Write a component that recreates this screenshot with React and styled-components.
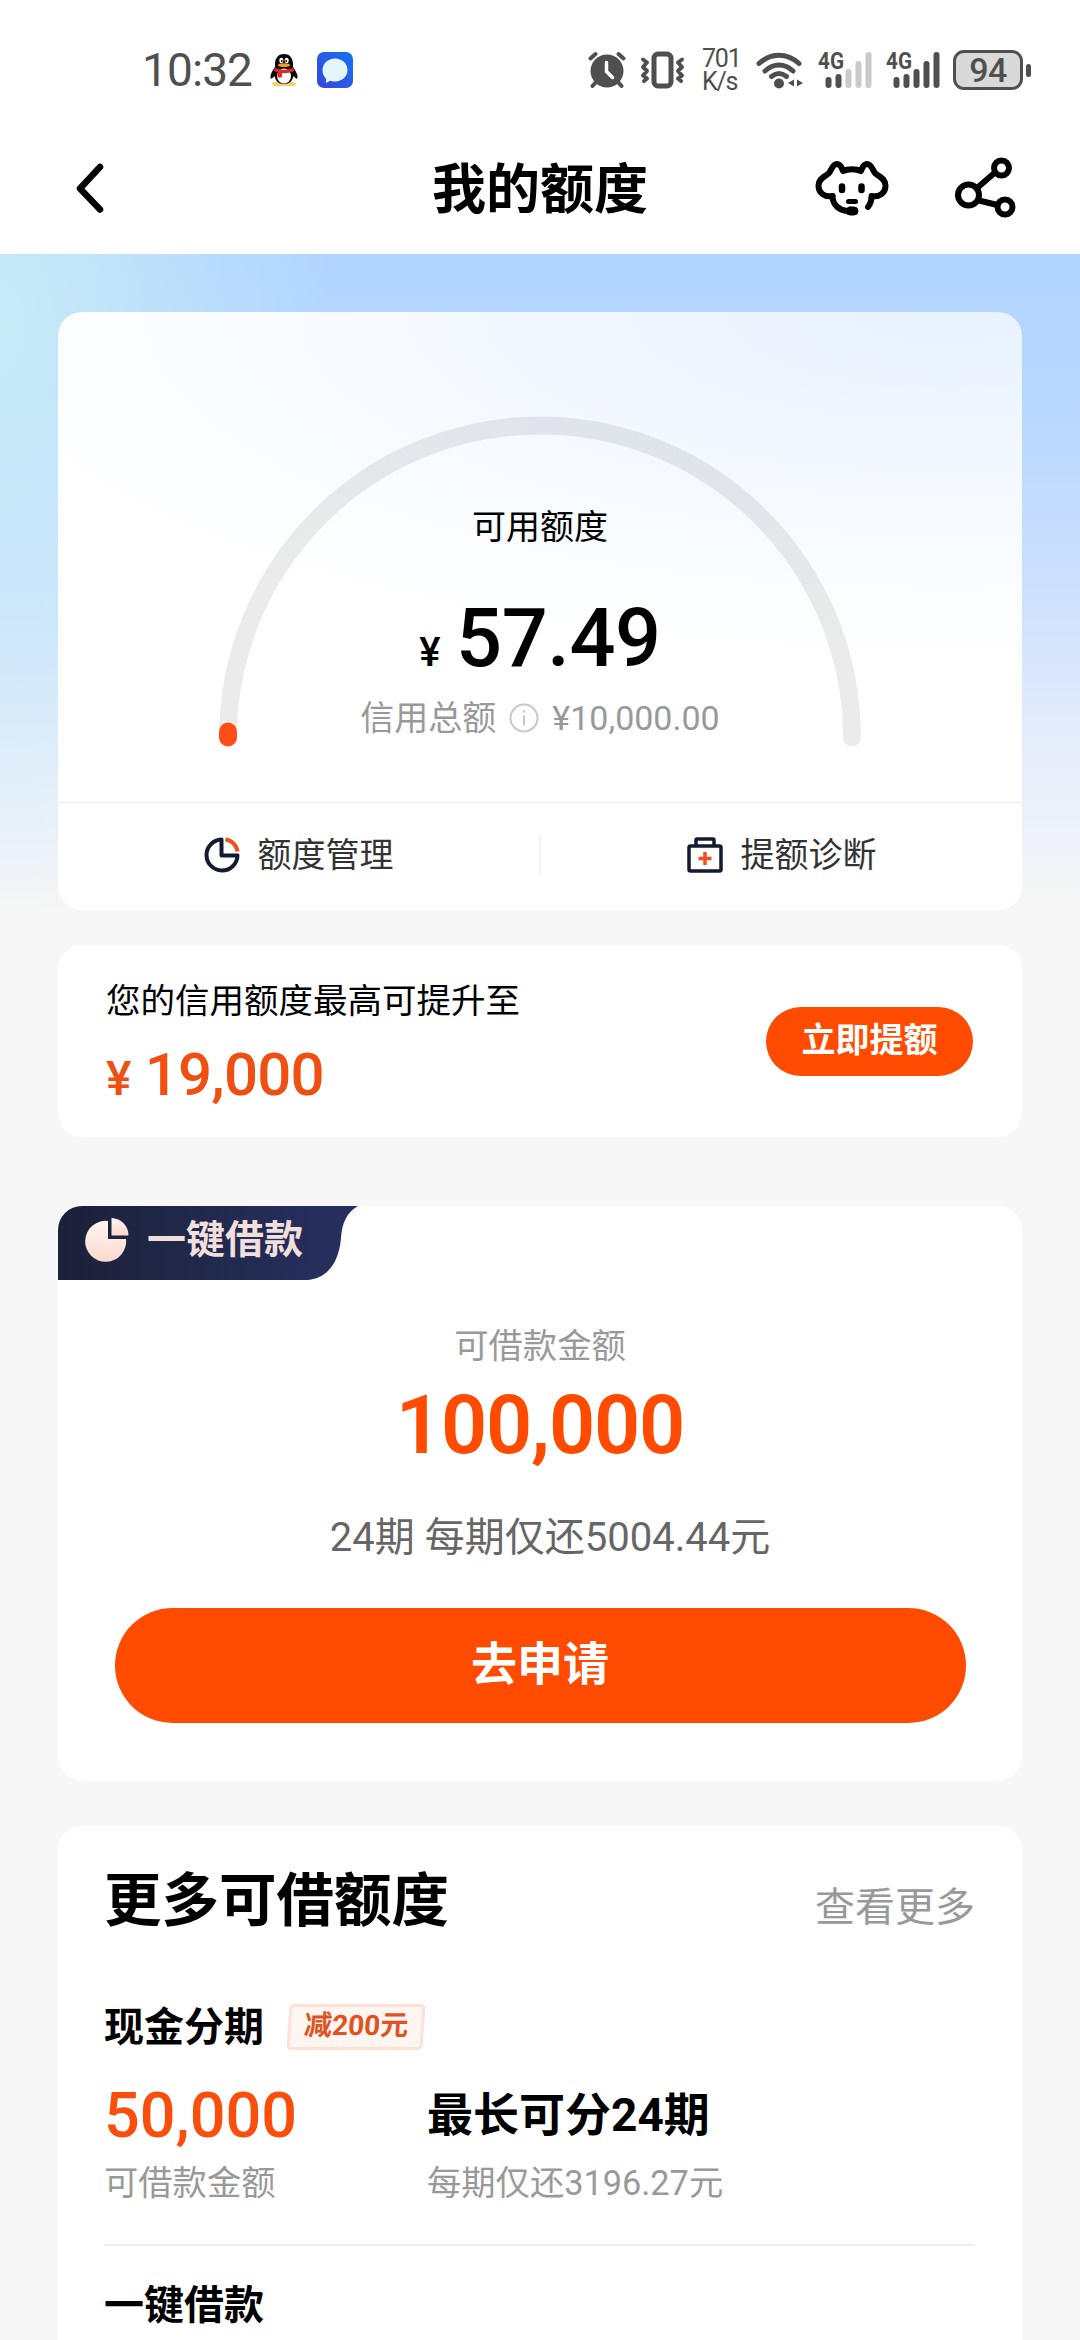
import React from 'react';
import styled, { createGlobalStyle } from 'styled-components';

const GlobalStyle = createGlobalStyle`
  * {
    box-sizing: border-box;
  }

  body {
    margin: 0;
    font-family: Roboto, 'Noto Sans CJK SC', sans-serif;
    color: #000;
    background-color: #f7f7f7;
  }

  svg {
    display: block;
    flex: none;
  }
`;

const Page = styled.div`
  width: 1080px;
  height: 2340px;
  overflow: hidden;
  background-color: #f7f7f7;
`;

const StatusBar = styled.div`
  display: flex;
  align-items: center;
  height: 140px;
  padding: 0 49px 0 142px;
  background-color: #fff;
  color: #4f4f4f;
`;

const Clock = styled.span`
  width: 127px;
  font-size: 46px;
  line-height: 60px;
  letter-spacing: -0.9px;
`;

const StatusIcons = styled.div`
  display: flex;
  align-items: center;
  margin-left: auto;
`;

const NetSpeed = styled.div`
  display: flex;
  flex-direction: column;
  width: 54px;
  padding-left: 16px;
  font-size: 25px;
  line-height: 23px;
  letter-spacing: -1.2px;
  white-space: nowrap;
`;

const Battery = styled.div`
  display: flex;
  align-items: center;
  justify-content: center;
  width: 70px;
  height: 40px;
  margin-left: 13px;
  border: 3px solid #4f4f4f;
  border-radius: 11px;
  background-color: #d9d9d9;
  font-size: 34px;
  font-weight: 500;
  line-height: 34px;
  letter-spacing: -0.6px;
`;

const BatteryTip = styled.span`
  width: 5px;
  height: 13px;
  margin-left: 3px;
  border-radius: 3px;
  background-color: #4f4f4f;
`;

const NavBar = styled.header`
  display: grid;
  grid-template-columns: 1fr auto 1fr;
  align-items: center;
  height: 114px;
  padding: 0 64px 18px;
  background-color: #fff;

  > svg {
    margin-left: 10px;
  }
`;

const NavTitle = styled.h1`
  margin: 5px 0 0;
  font-size: 54px;
  font-weight: 700;
  line-height: 70px;
`;

const NavActions = styled.div`
  display: flex;
  align-items: center;
  justify-content: flex-end;
  gap: 65px;
`;

const Content = styled.main`
  padding: 58px 58px 0;
  background:
    radial-gradient(ellipse 330px 600px at 0 70px, rgba(200, 236, 246, 0.95), rgba(200, 232, 248, 0) 100%),
    linear-gradient(180deg, #b0d4ff 0, #b8d7ff 150px, #cddffe 330px, #e3ecfb 480px, #f7f7f7 660px);
`;

const Card = styled.section`
  margin-top: ${(props) => props.$top || 0}px;
  border-radius: 24px;
  background-color: #fff;
  overflow: hidden;
`;

const QuotaCard = styled(Card)`
  height: 598px;
  background:
    radial-gradient(ellipse 1040px 360px at 92% 0, #e6f2fe 0, rgba(243, 248, 255, 0.85) 50%, rgba(255, 255, 255, 0) 100%),
    #fff;
`;

const Gauge = styled.div`
  display: grid;
  height: 489px;

  > * {
    grid-area: 1 / 1;
  }
`;

const GaugeText = styled.div`
  display: flex;
  flex-direction: column;
  align-items: center;
  padding-top: 195px;
`;

const GaugeLabel = styled.div`
  font-size: 34px;
  line-height: 40px;
`;

const Balance = styled.div`
  display: flex;
  align-items: baseline;
  gap: 16px;
  height: 90px;
  margin-top: 47px;
  font-size: 81px;
  font-weight: 500;
  line-height: 90px;
  letter-spacing: -0.4px;
`;

const BalanceSign = styled.span`
  font-size: 40px;
  line-height: 1;
`;

const TotalQuota = styled.div`
  display: flex;
  align-items: center;
  gap: 13px;
  margin-top: 14px;
  font-size: 34px;
  line-height: 40px;
  color: #999;
`;

const QuotaLinks = styled.div`
  display: flex;
  align-items: center;
  height: 109px;
  padding-bottom: 5px;
  border-top: 3px solid #f4f5f5;
`;

const QuotaLink = styled.div`
  display: flex;
  align-items: center;
  justify-content: center;
  gap: 18px;
  flex: 1;
  font-size: 34px;
  line-height: 40px;
  color: #333;

  & + & {
    border-left: 2px solid #f2f2f2;
  }
`;

const RaiseCard = styled(Card)`
  display: flex;
  align-items: center;
  justify-content: space-between;
  height: 192px;
  padding: 0 49px 0 48px;
`;

const RaiseText = styled.div`
  padding-top: 4px;
  font-size: 34.5px;
  line-height: 44px;
`;

const RaiseAmount = styled.div`
  display: flex;
  align-items: baseline;
  gap: 14px;
  margin-top: 20px;
  font-size: 60px;
  font-weight: 500;
  line-height: 64px;
  letter-spacing: -0.8px;
  color: #f04f12;
`;

const RaiseSign = styled.span`
  font-size: 48px;
  line-height: 1;
`;

const PillButton = styled.button`
  width: ${(props) => (props.$large ? 851 : 207)}px;
  height: ${(props) => (props.$large ? 115 : 69)}px;
  padding: 0 0 2px;
  border: 0;
  border-radius: 58px;
  background-color: #ff4b00;
  color: #fff;
  font-family: inherit;
  font-size: ${(props) => (props.$large ? 46 : 34)}px;
  font-weight: 700;
  line-height: 1.2;
`;

const LoanCard = styled(Card)`
  display: flex;
  flex-direction: column;
  align-items: center;
  height: 575px;
`;

const LoanTab = styled.div`
  display: grid;
  align-self: flex-start;

  > * {
    grid-area: 1 / 1;
  }
`;

const LoanTabLabel = styled.div`
  display: flex;
  align-items: center;
  gap: 18px;
  padding: 0 0 7px 27px;
  font-size: 39px;
  font-weight: 700;
  line-height: 44px;
  color: #f1dfdc;
`;

const LoanLabel = styled.div`
  margin-top: 46px;
  font-size: 34.3px;
  line-height: 40px;
  color: #999;
`;

const LoanAmount = styled.div`
  margin-top: 15px;
  font-size: 81px;
  font-weight: 600;
  line-height: 90px;
  letter-spacing: -1.2px;
  color: #ff4b00;
`;

const LoanPlan = styled.div`
  margin: 42px 0 45px;
  padding-left: 20px;
  font-size: 40px;
  line-height: 50px;
  color: #666;
`;

const MoreCard = styled(Card)`
  height: 560px;
  padding: 41px 47px 0 46px;
`;

const MoreHeader = styled.div`
  display: flex;
  align-items: center;
  justify-content: space-between;
`;

const MoreTitle = styled.h2`
  margin: 0;
  font-size: 57.5px;
  font-weight: 700;
  line-height: 70px;
`;

const MoreLink = styled.span`
  padding-top: 12px;
  font-size: 40px;
  line-height: 50px;
  color: #999;
`;

const ProductTitle = styled.div`
  display: flex;
  align-items: center;
  gap: 24px;
  margin-top: ${(props) => props.$top}px;
  font-size: 40px;
  font-weight: 700;
  line-height: 50px;
`;

const Coupon = styled.span`
  height: 46px;
  margin-bottom: 2px;
  padding: 0 13px;
  border: 3px solid #fde0d6;
  border-radius: 5px;
  background-color: #fff5f1;
  transform: skewX(-4deg);
  font-size: 28px;
  line-height: 38px;
  color: #e0521f;
`;

const ProductGrid = styled.div`
  display: grid;
  grid-template-columns: 323px 1fr;
  row-gap: 17px;
  margin-top: 32px;
  padding-bottom: 41px;
  border-bottom: 2px solid #eee;
`;

const ProductAmount = styled.div`
  font-size: 63px;
  font-weight: 500;
  line-height: 61px;
  color: #fa4f0c;
`;

const ProductTerm = styled.div`
  font-size: 46px;
  font-weight: 700;
  line-height: 60px;
`;

const ProductNote = styled.div`
  font-size: 34.3px;
  line-height: 40px;
  color: #999;
`;

const QQIcon = () => (
  <svg width="30" height="34" viewBox="0 0 30 34">
    <ellipse cx="10" cy="31" rx="7" ry="2.5" fill="#f3d06b" />
    <ellipse cx="20" cy="31" rx="7" ry="2.5" fill="#f3d06b" />
    <path d="M15 1C8.500 1 6 6 6 11v3c-3 4-5 8-4.500 11 1 2 3-1 4-2 1 5 4 8 9.500 8s8.500-3 9.500-8c1 1 3 4 4 2 .5-3-1.500-7-4.500-11v-3C24 6 21.500 1 15 1z" fill="#0b0b0b" />
    <ellipse cx="15" cy="23" rx="7" ry="7.500" fill="#fff" />
    <ellipse cx="12.300" cy="7.500" rx="2" ry="2.800" fill="#fff" />
    <ellipse cx="17.700" cy="7.500" rx="2" ry="2.800" fill="#fff" />
    <circle cx="12.800" cy="8" r=".9" />
    <circle cx="17.200" cy="8" r=".9" />
    <ellipse cx="15" cy="12.200" rx="6" ry="1.900" fill="#f0a020" />
    <path d="M5.500 14.500c6 3 13 3 19 0l.7 3.500c-4 1.800-8 2.300-12 2.100l-.4 4.500H8.500l.3-5.200L5 18z" fill="#e0252b" />
  </svg>
);

const ChatIcon = () => (
  <svg width="36" height="36" viewBox="0 0 36 36" style={{ marginLeft: 18 }}>
    <defs>
      <linearGradient id="chatBg" x1="0" y1="1" x2="1" y2="0">
        <stop offset="0" stopColor="#3a45dc" />
        <stop offset="1" stopColor="#1672f2" />
      </linearGradient>
    </defs>
    <rect width="36" height="36" rx="7" fill="url(#chatBg)" />
    <path d="M18 6.500c7 0 12.500 5 12.500 11.500S25 29.500 18 29.500c-2 0-3.500-.3-5-.7L9 31v-4.500C6.500 24.500 5.500 21.500 5.500 18 5.500 11.500 11 6.500 18 6.500z" fill="#e3f5fd" />
  </svg>
);

const AlarmIcon = () => (
  <svg width="38" height="38" viewBox="0 0 38 38" fill="none" stroke="#4f4f4f" strokeLinecap="round">
    <circle cx="19" cy="20" r="16.500" fill="#4f4f4f" stroke="none" />
    <path d="M2.500 7.500l5-4.500M35.500 7.500l-5-4.500M8 31l-3.500 4M30 31l3.500 4" strokeWidth="4" />
    <path d="M18.500 11.500v9l6 6" stroke="#fff" strokeWidth="3.500" />
  </svg>
);

const VibrateIcon = () => (
  <svg width="46" height="38" viewBox="0 0 46 38" fill="none" stroke="#4f4f4f" strokeWidth="5" style={{ marginLeft: 14 }}>
    <rect x="14" y="3" width="17" height="32" rx="4" />
    <path d="M3 8.500l4 3-4 4.500 4 4-4 4.500 4 3-3 2.500M42 8.500l-4 3 4 4.500-4 4 4 4.500-4 3 3 2.500" strokeWidth="4" strokeLinecap="round" strokeLinejoin="round" />
  </svg>
);

const WifiIcon = () => (
  <svg width="48" height="38" viewBox="0 0 48 38" fill="none" stroke="#4f4f4f" strokeWidth="5" strokeLinecap="round" style={{ marginLeft: 16 }}>
    <path d="M3 12.500c12-11 28-11 40 0M9 20c8.500-8 19.500-8 28 0M15.500 25.500c5-4 10-4 15 0" />
    <circle cx="23" cy="32.500" r="5" fill="#4f4f4f" stroke="none" />
    <path d="M38 28.500v7l-6-3.500zM41 28.500v7l6-3.500z" fill="#4f4f4f" stroke="none" />
  </svg>
);

const SignalIcon = ({ level }) => (
  <svg width="54" height="40" viewBox="0 0 54 40" overflow="visible" style={{ marginLeft: 14 }}>
    <text x="0" y="19" fontSize="23" fontWeight="700" fill="#4f4f4f" textLength="26" lengthAdjust="spacingAndGlyphs">4G</text>
    {[27, 24, 19, 11, 2].map((y, i) => (
      <rect key={y} x={7.5 + i * 10} y={y} width="6" height={38 - y} rx="3" fill={i < level ? '#4f4f4f' : '#cacaca'} />
    ))}
  </svg>
);

const BackIcon = () => (
  <svg width="30" height="52" viewBox="0 0 30 52" fill="none" stroke="#000" strokeWidth="6.500" strokeLinecap="round" strokeLinejoin="round">
    <path d="M26 5L6 26.500l20 21" />
  </svg>
);

const ServiceIcon = () => (
  <svg width="74" height="56" viewBox="0 0 74 56" fill="none" stroke="#000" strokeWidth="6" strokeLinecap="round" strokeLinejoin="round">
    <path d="M17.500 36c-8 1.500-14-3-14-10.500 0-8 7.500-9 10.500-12.500 2.500-3 3.500-9 8-9 4 0 4.500 4 6 7 5-2.500 13-2.500 18 0 1.500-3 2-7 6-7 4.500 0 5.500 6 8 9C63 16.500 70.500 17.500 70.500 25.500c0 7.500-6 12-14 10.500 0 5-1.500 8.500-3.500 11" />
    <path d="M17.500 36c0 9 7 14.500 15 15" />
    <rect x="31" y="47" width="12" height="8" rx="4" fill="#000" strokeWidth="1" />
    <path d="M27 26.500v3.500M46.500 26.500v3.500" strokeWidth="6.500" />
    <path d="M33.500 41.500h7" strokeWidth="5" />
  </svg>
);

const ShareIcon = () => (
  <svg width="62" height="62" viewBox="0 0 62 62" fill="none" stroke="#000" strokeWidth="6">
    <circle cx="14.500" cy="38" r="10.500" />
    <circle cx="47.500" cy="11" r="7.500" />
    <circle cx="51" cy="50" r="7.500" />
    <path d="M23 31l18-15.500M25 43.500l18.500 4.500" />
  </svg>
);

const QuotaGauge = () => (
  <svg width="964" height="489" viewBox="0 0 964 489" fill="none" strokeWidth="18" strokeLinecap="round">
    <path d="M170 425.500A312 312 0 0 1 794 425.500" stroke="#000" strokeOpacity=".08" />
    <path d="M170 425.500v-6" stroke="#ff4f18" />
  </svg>
);

const InfoIcon = () => (
  <svg width="30" height="30" viewBox="0 0 30 30" fill="none" stroke="#c8c8c8" strokeWidth="2">
    <circle cx="15" cy="15" r="13.500" />
    <path d="M15 12.500v10" />
    <circle cx="15" cy="8.500" r="1.300" fill="#c8c8c8" stroke="none" />
  </svg>
);

const ManageIcon = () => (
  <svg width="36" height="36" viewBox="0 0 36 36" fill="none" strokeWidth="4">
    <path d="M17.500 2.500A15.500 15.500 0 1 0 33.500 18.500H17.500z" stroke="#141a33" strokeLinejoin="round" />
    <path d="M21.500 2.500A14 14 0 0 1 33.500 14.500" stroke="#e8551c" />
  </svg>
);

const DiagnoseIcon = () => (
  <svg width="36" height="36" viewBox="0 0 36 36" fill="none" stroke="#141a33" strokeWidth="3.500" strokeLinejoin="round">
    <rect x="2" y="9" width="32" height="25" rx="1.500" />
    <path d="M9 9V3q0-1 1-1h16q1 0 1 1v6" />
    <path d="M18 15v13M11.500 21.500h13" stroke="#f0501a" />
  </svg>
);

const TabShape = () => (
  <svg width="302" height="74" viewBox="0 0 302 74">
    <defs>
      <linearGradient id="tabBg" x1="0" y1="0" x2="1" y2="0">
        <stop offset="0" stopColor="#1b2138" />
        <stop offset=".85" stopColor="#262e5c" />
      </linearGradient>
    </defs>
    <path d="M0 0H300C289 6 284 17 283 32C281 56 270 72 250 74H0z" fill="url(#tabBg)" />
  </svg>
);

const PieIcon = () => (
  <svg width="44" height="44" viewBox="0 0 44 44">
    <defs>
      <linearGradient id="pieBg" x1="0" y1="0" x2="0" y2="1">
        <stop offset="0" stopColor="#fff6f2" />
        <stop offset="1" stopColor="#fbd9cd" />
      </linearGradient>
    </defs>
    <path d="M23 3A20.500 20.500 0 1 0 41 21H23z" fill="url(#pieBg)" />
    <path d="M26.500 0A17.500 17.500 0 0 1 43.500 17.500H26.500z" fill="url(#pieBg)" />
  </svg>
);

const App = () => {
  return (
    <Page>
      <GlobalStyle />
      <StatusBar>
        <Clock>10:32</Clock>
        <QQIcon />
        <ChatIcon />
        <StatusIcons>
          <AlarmIcon />
          <VibrateIcon />
          <NetSpeed>
            <span>701</span>
            <span>K/s</span>
          </NetSpeed>
          <WifiIcon />
          <SignalIcon level={2} />
          <SignalIcon level={5} />
          <Battery>94</Battery>
          <BatteryTip />
        </StatusIcons>
      </StatusBar>

      <NavBar>
        <BackIcon />
        <NavTitle>我的额度</NavTitle>
        <NavActions>
          <ServiceIcon />
          <ShareIcon />
        </NavActions>
      </NavBar>

      <Content>
        <QuotaCard>
          <Gauge>
            <QuotaGauge />
            <GaugeText>
              <GaugeLabel>可用额度</GaugeLabel>
              <Balance>
                <BalanceSign>¥</BalanceSign>
                <span>57.49</span>
              </Balance>
              <TotalQuota>
                <span>信用总额</span>
                <InfoIcon />
                <span>¥10,000.00</span>
              </TotalQuota>
            </GaugeText>
          </Gauge>
          <QuotaLinks>
            <QuotaLink>
              <ManageIcon />
              额度管理
            </QuotaLink>
            <QuotaLink>
              <DiagnoseIcon />
              提额诊断
            </QuotaLink>
          </QuotaLinks>
        </QuotaCard>

        <RaiseCard $top={35}>
          <div>
            <RaiseText>您的信用额度最高可提升至</RaiseText>
            <RaiseAmount>
              <RaiseSign>¥</RaiseSign>
              <span>19,000</span>
            </RaiseAmount>
          </div>
          <PillButton>立即提额</PillButton>
        </RaiseCard>

        <LoanCard $top={69}>
          <LoanTab>
            <TabShape />
            <LoanTabLabel>
              <PieIcon />
              一键借款
            </LoanTabLabel>
          </LoanTab>
          <LoanLabel>可借款金额</LoanLabel>
          <LoanAmount>100,000</LoanAmount>
          <LoanPlan>24期 每期仅还5004.44元</LoanPlan>
          <PillButton $large>去申请</PillButton>
        </LoanCard>

        <MoreCard $top={45}>
          <MoreHeader>
            <MoreTitle>更多可借额度</MoreTitle>
            <MoreLink>查看更多</MoreLink>
          </MoreHeader>
          <ProductTitle $top={66}>
            现金分期
            <Coupon>减200元</Coupon>
          </ProductTitle>
          <ProductGrid>
            <ProductAmount>50,000</ProductAmount>
            <ProductTerm>最长可分24期</ProductTerm>
            <ProductNote>可借款金额</ProductNote>
            <ProductNote>每期仅还3196.27元</ProductNote>
          </ProductGrid>
          <ProductTitle $top={35}>一键借款</ProductTitle>
        </MoreCard>
      </Content>
    </Page>
  );
};

export default App;
